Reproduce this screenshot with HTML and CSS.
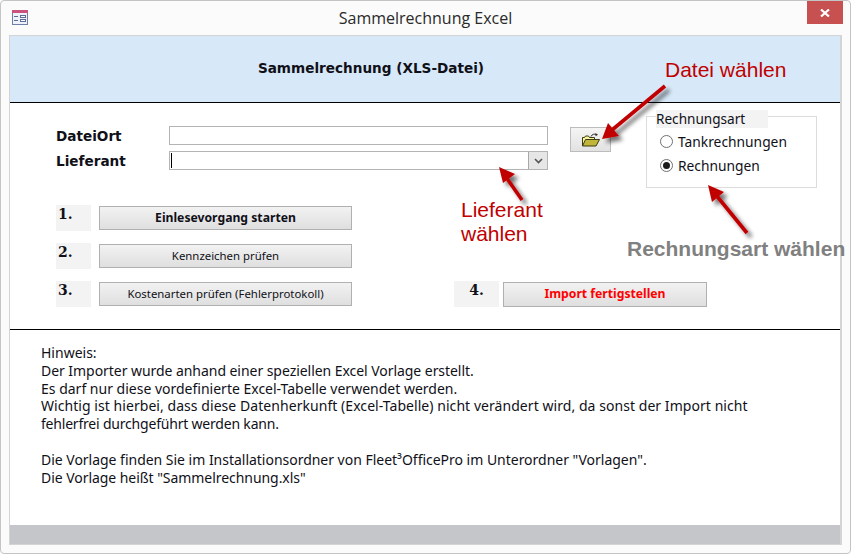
FILE: index.html
```html
<!DOCTYPE html>
<html lang="de">
<head>
<meta charset="utf-8">
<title>Sammelrechnung Excel</title>
<link rel="stylesheet" href="styles.css">
</head>
<body>
<div class="window">
  <div class="titlebar">
    <svg class="app-icon" width="17" height="16" viewBox="0 0 17 16">
      <rect x="0.5" y="0.5" width="15" height="14" fill="#eef1f8" stroke="#6f7fa6"/>
      <rect x="0" y="0" width="16" height="3" fill="#c9527f"/>
      <path d="M2 6.5h4M2 10.5h4" stroke="#5b6c96"/>
      <rect x="8.5" y="5.5" width="5" height="2" fill="#fff" stroke="#5b6c96"/>
      <rect x="8.5" y="9.5" width="5" height="2" fill="#fff" stroke="#5b6c96"/>
    </svg>
    <div class="title">Sammelrechnung Excel</div>
    <div class="close">
      <svg width="10" height="8" viewBox="0 0 10 8"><path d="M1 0.5l8 7M9 0.5l-8 7" stroke="#fff" stroke-width="2.2"/></svg>
    </div>
  </div>
  <div class="form">
    <div class="header">Sammelrechnung (XLS-Datei)</div>
    <div class="detail">
      <div class="top-row">
        <div class="fields">
          <div class="field">
            <div class="label">DateiOrt</div>
            <div class="input"></div>
          </div>
          <div class="field">
            <div class="label">Lieferant</div>
            <div class="input combo">
              <span class="caret"></span>
              <span class="drop">
                <svg width="9" height="6" viewBox="0 0 9 6"><path d="M1 1l3.5 3.5L8 1" fill="none" stroke="#555" stroke-width="1.6"/></svg>
              </span>
            </div>
          </div>
        </div>
        <div class="browse">
          <svg width="18" height="14" viewBox="0 0 18 14">
            <path d="M9 3.5C10 1 12.5 .8 14.5 1.5" fill="none" stroke="#333"/>
            <path d="M13.5 0l2.5 1.7-2.5 1.6z" fill="#333"/>
            <path d="M.5 13V4.5h2l1-1.500h3l1 1.500h5v2" fill="#f6f2a0" stroke="#3a3a10"/>
            <path d="M.5 13l3-6.500h14l-3.500 6.500z" fill="#c2b63a" stroke="#3a3a10"/>
          </svg>
        </div>
        <div class="group">
          <div class="legend">Rechnungsart</div>
          <div class="option"><span class="radio"></span>Tankrechnungen</div>
          <div class="option"><span class="radio checked"></span>Rechnungen</div>
        </div>
      </div>
      <div class="steps">
        <div class="step">
          <div class="num">1.</div>
          <div class="btn strong">Einlesevorgang starten</div>
        </div>
        <div class="step">
          <div class="num">2.</div>
          <div class="btn">Kennzeichen prüfen</div>
        </div>
        <div class="step last">
          <div class="num">3.</div>
          <div class="btn">Kostenarten prüfen (Fehlerprotokoll)</div>
          <div class="num wide">4.</div>
          <div class="btn final">Import fertigstellen</div>
        </div>
      </div>
    </div>
    <div class="hint">
      <p>Hinweis:</p>
      <p class="tight-a">Der Importer wurde anhand einer speziellen Excel Vorlage erstellt.</p>
      <p>Es darf nur diese vordefinierte Excel-Tabelle verwendet werden.</p>
      <p class="loose">Wichtig ist hierbei, dass diese Datenherkunft (Excel-Tabelle) nicht verändert wird, da sonst der Import nicht</p>
      <p class="tight-b">fehlerfrei durchgeführt werden kann.</p>
      <p>&nbsp;</p>
      <p class="tight-c">Die Vorlage finden Sie im Installationsordner von Fleet³OfficePro im Unterordner "Vorlagen".</p>
      <p class="tight-a">Die Vorlage heißt "Sammelrechnung.xls"</p>
    </div>
    <div class="footer"></div>
  </div>

  <svg class="arrows" width="851" height="554" viewBox="0 0 851 554">
    <defs>
      <filter id="sh" x="-30%" y="-30%" width="160%" height="160%">
        <feGaussianBlur in="SourceAlpha" stdDeviation="2"/>
        <feOffset dx="4" dy="4"/>
        <feComponentTransfer><feFuncA type="linear" slope="0.55"/></feComponentTransfer>
        <feMerge><feMergeNode/><feMergeNode in="SourceGraphic"/></feMerge>
      </filter>
    </defs>
    <g filter="url(#sh)">
      <path d="M665 86L612 130" stroke="#c00000" stroke-width="3.600"/>
      <path d="M602 139L608 123L619 136z" fill="#c00000"/>
    </g>
    <g filter="url(#sh)">
      <path d="M522 200L506 177" stroke="#c00000" stroke-width="3.600"/>
      <path d="M499 167L515 174L503 183z" fill="#c00000"/>
    </g>
    <g filter="url(#sh)">
      <path d="M747 233L716 195" stroke="#c00000" stroke-width="3.600"/>
      <path d="M708 185L724 192L712 202z" fill="#c00000"/>
    </g>
  </svg>
  <div class="note note-file">Datei wählen</div>
  <div class="note note-supplier">Lieferant<br>wählen</div>
  <div class="note note-type">Rechnungsart wählen</div>
</div>
</body>
</html>
```

FILE: styles.css
```css
* { box-sizing: border-box; }
html, body { margin: 0; padding: 0; }
body { width: 851px; height: 554px; background: #fff; overflow: hidden; }

.window {
  position: relative;
  width: 851px;
  height: 554px;
  background: #fbfbfb;
  border: 1px solid #c4c4c4;
  border-radius: 4px;
  padding: 0 8px 8px 8px;
  display: flex;
  flex-direction: column;
  font-family: "Noto Sans", sans-serif;
  color: #101018;
}

.titlebar {
  height: 34px;
  display: flex;
  align-items: flex-start;
  position: relative;
}
.app-icon { margin: 9px 0 0 3px; flex: none; }
.title {
  position: absolute;
  left: 0;
  right: 0;
  top: 7px;
  text-align: center;
  font-family: "Open Sans", sans-serif;
  font-size: 16px;
  line-height: 20px;
  color: #2a2a2a;
}
.close {
  position: absolute;
  right: -1px;
  top: 0;
  width: 36px;
  height: 23px;
  background: #c75050;
  display: flex;
  align-items: center;
  justify-content: center;
}

.form {
  flex: 1;
  display: flex;
  flex-direction: column;
  background: #fff;
  border: 1px solid #d4d4d4;
  border-width: 1px 2px 1px 1px;
}
.header {
  height: 67px;
  padding-right: 108px;
  background: #d7e8f8;
  border-bottom: 1px solid #000;
  text-align: center;
  font-family: "DejaVu Sans", sans-serif;
  font-weight: bold;
  font-size: 13.600px;
  line-height: 64px;
}
.detail {
  height: 227px;
  border-bottom: 1px solid #000;
  padding: 6px 0 0 46px;
}
.top-row { display: flex; align-items: flex-start; height: 90px; }
.fields { width: 492px; padding-top: 17px; display: flex; flex-direction: column; gap: 6px; }
.field { display: flex; height: 19px; }
.label {
  width: 113px;
  font-family: "DejaVu Sans", sans-serif;
  font-weight: bold;
  font-size: 13.600px;
  line-height: 20px;
}
.input {
  width: 379px;
  height: 19px;
  background: #fff;
  border: 1px solid #b4b4b4;
  position: relative;
}
.combo { display: flex; justify-content: space-between; }
.caret { width: 1px; height: 15px; margin: 1px 0 0 1px; background: #000; }
.drop {
  width: 19px;
  height: 17px;
  background: #e6e6e6;
  border-left: 1px solid #a8a8a8;
  display: flex;
  align-items: center;
  justify-content: center;
}
.browse {
  width: 41px;
  height: 25px;
  margin: 18px 0 0 22px;
  background: linear-gradient(#f4f4f4, #e2e2e2);
  border: 1px solid #bcbcbc;
  display: flex;
  align-items: center;
  justify-content: center;
}
.group {
  position: relative;
  width: 171px;
  height: 72px;
  margin: 7px 0 0 35px;
  border: 1px solid #dcdcdc;
  padding-top: 12px;
}
.legend {
  position: absolute;
  left: 9px;
  top: -7px;
  width: 112px;
  height: 18px;
  background: #f3f3f3;
  font-size: 13.600px;
  line-height: 18px;
}
.option {
  display: flex;
  align-items: center;
  height: 24px;
  padding-left: 13px;
  gap: 5px;
  font-size: 13.800px;
}
.radio {
  width: 13px;
  height: 13px;
  border: 1px solid #707070;
  border-radius: 50%;
  background: #fff;
  display: flex;
  align-items: center;
  justify-content: center;
}
.checked::after {
  content: "";
  width: 7px;
  height: 7px;
  border-radius: 50%;
  background: #1c1c1c;
}

.steps { padding-top: 6px; display: flex; flex-direction: column; gap: 12px; }
.step { display: flex; align-items: center; height: 26px; }
.num {
  width: 35px;
  height: 26px;
  background: #f3f3f3;
  font-family: "DejaVu Serif", serif;
  font-weight: bold;
  font-size: 14px;
  line-height: 18px;
  padding-left: 2px;
  margin-right: 8px;
}
.num.wide { width: 45px; margin: 0 4px 0 102px; text-align: center; padding: 0; }
.btn {
  width: 253px;
  height: 24px;
  background: linear-gradient(#f2f2f2, #dfdfdf);
  border: 1px solid #b0b0b0;
  text-align: center;
  font-size: 11.400px;
  line-height: 22px;
}
.strong { font-weight: bold; font-size: 12.200px; }
.final { width: 204px; height: 25px; color: #f00; font-weight: bold; font-size: 12.200px; }

.hint {
  flex: 1;
  padding: 14px 0 0 31px;
  font-size: 14px;
  line-height: 17.800px;
}
.hint p { margin: 0; white-space: nowrap; }
.tight-a { letter-spacing: -0.05px; }
.tight-b { letter-spacing: -0.2px; }
.tight-c { letter-spacing: -0.02px; }
.loose { letter-spacing: 0.055px; }
.footer { height: 19px; background: #c5c6ca; }

.arrows { position: absolute; left: -1px; top: -1px; pointer-events: none; }
.note {
  position: absolute;
  font-family: "Liberation Sans", sans-serif;
  color: #c00000;
  font-size: 21px;
  line-height: 24px;
}
.note-file { left: 664px; top: 57px; }
.note-supplier { left: 460px; top: 197px; }
.note-type { left: 626px; top: 236px; font-weight: bold; color: #808080; }
```
